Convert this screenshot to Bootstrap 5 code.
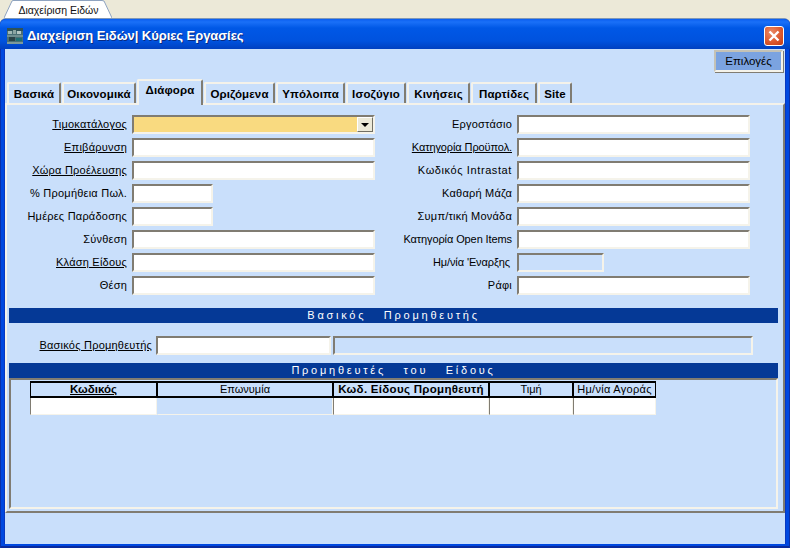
<!DOCTYPE html>
<html lang="el">
<head>
<meta charset="utf-8">
<title>Διαχείριση Ειδών</title>
<link href="https://cdn.jsdelivr.net/npm/bootstrap@5.3.0/dist/css/bootstrap.min.css" rel="stylesheet">
<style>
html,body{width:790px;height:548px;overflow:hidden;margin:0;}
body{background:#ECE9D8;font-family:"Liberation Sans",Arial,sans-serif;font-size:11px;line-height:13px;color:#000;}
.doc-strip{height:18px;padding-left:4px;}
.doc-mid{width:89px;height:18px;padding-left:2px;background:#fff;border-top:1px solid #8ea3c0;font-size:10.5px;line-height:18px;text-align:center;color:#111;white-space:nowrap;}
.doc-strip svg{display:block;}
.xp-window{height:530px;background:#0048e0;border-top:1px solid #7f97b6;border-radius:6px 6px 0 0;padding:0 5px 4px 5px;box-shadow:inset 1px 0 0 #0a30a8,inset -1px 0 0 #0a30a8,inset 0 -2px 0 #0a2a9c;}
.xp-title{height:30px;margin:0 -5px;padding:3px 6px 0 7px;background:linear-gradient(#0a5ef0 0,#1a70f8 3px,#0058e6 9px,#0052de 22px,#0040c0 30px);border-radius:6px 6px 0 0;color:#fff;font-weight:700;font-size:13px;letter-spacing:-.06px;text-shadow:1px 1px 0 #0a2a80;}
.xp-title svg{display:block;}
.xp-close{width:20px;height:20px;border:1px solid #fff;border-radius:3px;background:radial-gradient(circle at 35% 30%,#ea8a66,#dc5a30 55%,#c23a12);padding:0;display:flex;align-items:center;justify-content:center;}
.xp-body{height:495px;background:#c9dffb;box-shadow:-1px 0 0 #0838c0,1px 0 0 #0838c0;}
.opt-row{height:30px;padding:0 2px 0 0;}
.btn.opt-btn{--bs-btn-bg:#7ba3e0;--bs-btn-hover-bg:#7ba3e0;--bs-btn-color:#000;--bs-btn-hover-color:#000;width:69px;height:22px;margin-top:1px;padding:0;font-size:11.5px;line-height:16px;border-radius:0;border:2px solid;border-color:#c4c2b6 #f5f3ea #f5f3ea #c4c2b6;box-shadow:1px 1px 0 #807c72;}
.form-tabs{border:0;height:24px;padding-left:2px;align-items:flex-end;flex-wrap:nowrap;gap:0;}
.form-tabs .nav-item{flex:none;}
.form-tabs .nav-item:nth-child(1){width:55px;}
.form-tabs .nav-item:nth-child(2){width:75px;}
.form-tabs .nav-item:nth-child(3){width:67px;}
.form-tabs .nav-item:nth-child(4){width:72px;}
.form-tabs .nav-item:nth-child(5){width:70px;}
.form-tabs .nav-item:nth-child(6){width:61px;}
.form-tabs .nav-item:nth-child(7){width:64px;}
.form-tabs .nav-item:nth-child(8){width:67px;}
.form-tabs .nav-item:nth-child(9){width:35px;}
.form-tabs .nav-link{display:block;height:21px;padding:3px 0 0 0;margin:0 1px 0 0;text-align:center;border:0;border-top:2px solid #f4f2ea;border-left:2px solid #f4f2ea;border-right:2px solid #807c72;border-radius:2px 2px 0 0;background:#c9dffb;color:#000;font-weight:700;font-size:11.5px;line-height:14px;letter-spacing:.15px;white-space:nowrap;}
.form-tabs .nav-link.active{height:26px;margin-bottom:-2px;padding-top:2px;background:#c9dffb;color:#000;border-top:2px solid #f4f2ea;border-left:2px solid #f4f2ea;border-right:2px solid #807c72;position:relative;z-index:2;}
.tab-panel{height:410px;border-top:2px solid #f4f2ea;border-left:2px solid #f4f2ea;border-right:2px solid #807c72;border-bottom:2px solid #807c72;padding:10px 0 0 2px;}
.fields-wrap{height:193px;}
.field-col{display:flex;flex-direction:column;gap:4px;}
.col-left{width:368px;}
.col-right{width:373px;}
.field-line{display:flex;align-items:center;height:19px;}
.col-left .field-lbl{width:118px;}
.col-right .field-lbl{width:135px;}
.field-lbl{text-align:right;white-space:nowrap;flex:none;letter-spacing:.02em;}
.lbl-link{text-decoration:underline;}
.lbl-tight{letter-spacing:-.1px;}
.lbl-loose{letter-spacing:.6px;}
.lbl-gap{padding-right:2px;}
.sunk{display:block;flex:none;height:19px;min-height:0;padding:0 3px;border-radius:0;font-size:11px;background:#fff;border:2px solid;border-color:#807c72 #f5f3ea #f5f3ea #807c72;margin-left:5px;}
.sunk:focus{box-shadow:none;border-color:#807c72 #f5f3ea #f5f3ea #807c72;}
.sunk.ro,.sunk.ro:disabled{background:#c9dffb;}
.w-wide{width:243px;}
.w-short{width:81px;}
.w-right{width:233px;}
.w-date{width:87px;}
.w-sup{width:175px;}
.w-supname{width:420px;}
.combo{display:flex;flex:none;width:243px;height:19px;margin-left:5px;background:#f9da80;border:2px solid;border-color:#807c72 #f5f3ea #f5f3ea #807c72;justify-content:flex-end;}
.combo-arrow{width:16px;height:15px;background:#ece9d8;border:1px solid;border-color:#fff #716f64 #716f64 #fff;display:flex;align-items:center;justify-content:center;}
.sect-bar{height:15px;margin:0 5px 0 0;background:#053996;color:#fff;text-align:center;font-size:11px;line-height:15px;letter-spacing:2.75px;word-spacing:3px;white-space:pre;}
.main-sup{height:40px;padding:13px 0 0 0;margin:0;}
.main-sup .field-lbl{width:143px;padding-top:3px;}
.main-sup .sunk{margin-left:4px;}
.main-sup .sunk+.sunk{margin-left:2px;}
.grid-box{height:131px;margin:0 5px 0 0;padding:1px 0 0 19px;border:2px solid;border-color:#807c72 #f5f3ea #f5f3ea #807c72;}
.table.sup-grid{--bs-table-color:#000;--bs-table-bg:transparent;color:#000;table-layout:fixed;width:626px;border-collapse:separate;border-spacing:0;margin:0;}
.table.sup-grid>thead>tr>th{height:17px;padding:0;font-size:11px;line-height:13px;text-align:center;font-weight:400;color:#000;background:transparent;box-shadow:none;border:2px solid #000;border-left-width:1px;border-right-width:1px;white-space:nowrap;}
.table.sup-grid>thead>tr>th.hb{font-weight:700;font-size:11.5px;}
.table.sup-grid>thead>tr>th.hb-wide{letter-spacing:.3px;}
.table.sup-grid>thead>tr>th.h-wide{letter-spacing:.3px;}
.table.sup-grid>tbody>tr>td{height:17px;padding:0;background:#fff;border:1px solid;border-color:#807c72 #f5f3ea #f5f3ea #807c72;border-top:0;}
.table.sup-grid>tbody>tr>td.grey{background:#c9dffb;border-left-color:#c9dffb;}
.col-a{width:127px;}.col-b{width:176px;}.col-c{width:156px;}.col-d{width:84px;}.col-e{width:83px;}
</style>
</head>
<body>
<div class="doc-strip d-flex">
  <svg width="9" height="18" viewBox="0 0 9 18"><path d="M0 18 L8 1 L9 1 L9 18Z" fill="#fff"/><path d="M0 18 L8 1 L9 .5" fill="none" stroke="#8ea3c0"/></svg>
  <div class="doc-mid">Διαχείριση Ειδών</div>
  <svg width="10" height="18" viewBox="0 0 10 18"><path d="M0 1 L2 1 L10 18 L0 18Z" fill="#fff"/><path d="M0 .5 L2 1 L10 18" fill="none" stroke="#8ea3c0"/></svg>
</div>
<div class="xp-window">
  <div class="xp-title d-flex align-items-center justify-content-between">
    <div class="d-flex align-items-center gap-1">
      <svg width="16" height="16" viewBox="0 0 16 16"><rect width="16" height="16" fill="#4a6f74"/><rect y="0" width="16" height="3" fill="#2f5257"/><rect x="1" y="3" width="4" height="3" fill="#9fb7b4"/><rect x="6" y="2" width="3" height="4" fill="#8aa5a2"/><rect x="10" y="3" width="4" height="3" fill="#b4c6c2"/><rect y="7" width="16" height="2" fill="#6f8f90"/><rect x="2" y="9" width="6" height="4" fill="#2a4347"/><rect x="9" y="10" width="6" height="3" fill="#1f6f72"/><rect y="14" width="16" height="2" fill="#7d9a9a"/></svg>
      <span>Διαχείριση Ειδών| Κύριες Εργασίες</span>
    </div>
    <button type="button" class="xp-close" aria-label="Κλείσιμο"><svg width="12" height="12" viewBox="0 0 12 12"><path d="M1.5 1.5 L10.5 10.5 M10.5 1.5 L1.5 10.5" stroke="#fff" stroke-width="2.4"/></svg></button>
  </div>
  <div class="xp-body">
    <div class="opt-row d-flex justify-content-end"><button type="button" class="btn opt-btn">Επιλογές</button></div>
    <ul class="nav nav-tabs form-tabs">
      <li class="nav-item"><a class="nav-link" href="#">Βασικά</a></li>
      <li class="nav-item"><a class="nav-link" href="#">Οικονομικά</a></li>
      <li class="nav-item"><a class="nav-link active" href="#">Διάφορα</a></li>
      <li class="nav-item"><a class="nav-link" href="#">Οριζόμενα</a></li>
      <li class="nav-item"><a class="nav-link" href="#">Υπόλοιπα</a></li>
      <li class="nav-item"><a class="nav-link" href="#">Ισοζύγιο</a></li>
      <li class="nav-item"><a class="nav-link" href="#">Κινήσεις</a></li>
      <li class="nav-item"><a class="nav-link" href="#">Παρτίδες</a></li>
      <li class="nav-item"><a class="nav-link" href="#">Site</a></li>
    </ul>
    <div class="tab-panel">
      <div class="fields-wrap d-flex">
        <div class="field-col col-left">
          <div class="field-line"><span class="field-lbl lbl-link">Τιμοκατάλογος</span><div class="combo"><span class="combo-arrow"><svg width="8" height="4" viewBox="0 0 8 4"><path d="M0 0H8L4 4Z" fill="#000"/></svg></span></div></div>
          <div class="field-line"><span class="field-lbl lbl-link">Επιβάρυνση</span><input class="form-control sunk w-wide"></div>
          <div class="field-line"><span class="field-lbl lbl-link">Χώρα Προέλευσης</span><input class="form-control sunk w-wide"></div>
          <div class="field-line"><span class="field-lbl">% Προμήθεια Πωλ.</span><input class="form-control sunk w-short"></div>
          <div class="field-line"><span class="field-lbl">Ημέρες Παράδοσης</span><input class="form-control sunk w-short"></div>
          <div class="field-line"><span class="field-lbl">Σύνθεση</span><input class="form-control sunk w-wide"></div>
          <div class="field-line"><span class="field-lbl lbl-link">Κλάση Είδους</span><input class="form-control sunk w-wide"></div>
          <div class="field-line"><span class="field-lbl">Θέση</span><input class="form-control sunk w-wide"></div>
        </div>
        <div class="field-col col-right">
          <div class="field-line"><span class="field-lbl">Εργοστάσιο</span><input class="form-control sunk w-right"></div>
          <div class="field-line"><span class="field-lbl lbl-link lbl-tight">Κατηγορία Προϋπολ.</span><input class="form-control sunk w-right"></div>
          <div class="field-line"><span class="field-lbl lbl-loose">Κωδικός Intrastat</span><input class="form-control sunk w-right"></div>
          <div class="field-line"><span class="field-lbl">Καθαρή Μάζα</span><input class="form-control sunk w-right"></div>
          <div class="field-line"><span class="field-lbl">Συμπ/τική Μονάδα</span><input class="form-control sunk w-right"></div>
          <div class="field-line"><span class="field-lbl lbl-tight">Κατηγορία Open Items</span><input class="form-control sunk w-right"></div>
          <div class="field-line"><span class="field-lbl lbl-tight lbl-gap">Ημ/νία 'Εναρξης</span><input class="form-control sunk ro w-date" disabled></div>
          <div class="field-line"><span class="field-lbl">Ράφι</span><input class="form-control sunk w-right"></div>
        </div>
      </div>
      <div class="sect-bar">Βασικός  Προμηθευτής</div>
      <div class="main-sup d-flex align-items-start">
        <span class="field-lbl lbl-link">Βασικός Προμηθευτής</span>
        <input class="form-control sunk w-sup">
        <input class="form-control sunk ro w-supname" disabled>
      </div>
      <div class="sect-bar">Προμηθευτές  του  Είδους</div>
      <div class="grid-box">
        <table class="table sup-grid">
          <colgroup><col class="col-a"><col class="col-b"><col class="col-c"><col class="col-d"><col class="col-e"></colgroup>
          <thead><tr><th class="hb"><u>Κωδικός</u></th><th>Επωνυμία</th><th class="hb hb-wide">Κωδ. Είδους Προμηθευτή</th><th>Τιμή</th><th class="h-wide">Ημ/νία Αγοράς</th></tr></thead>
          <tbody><tr><td></td><td class="grey"></td><td></td><td></td><td></td></tr></tbody>
        </table>
      </div>
    </div>
  </div>
</div>
</body>
</html>
